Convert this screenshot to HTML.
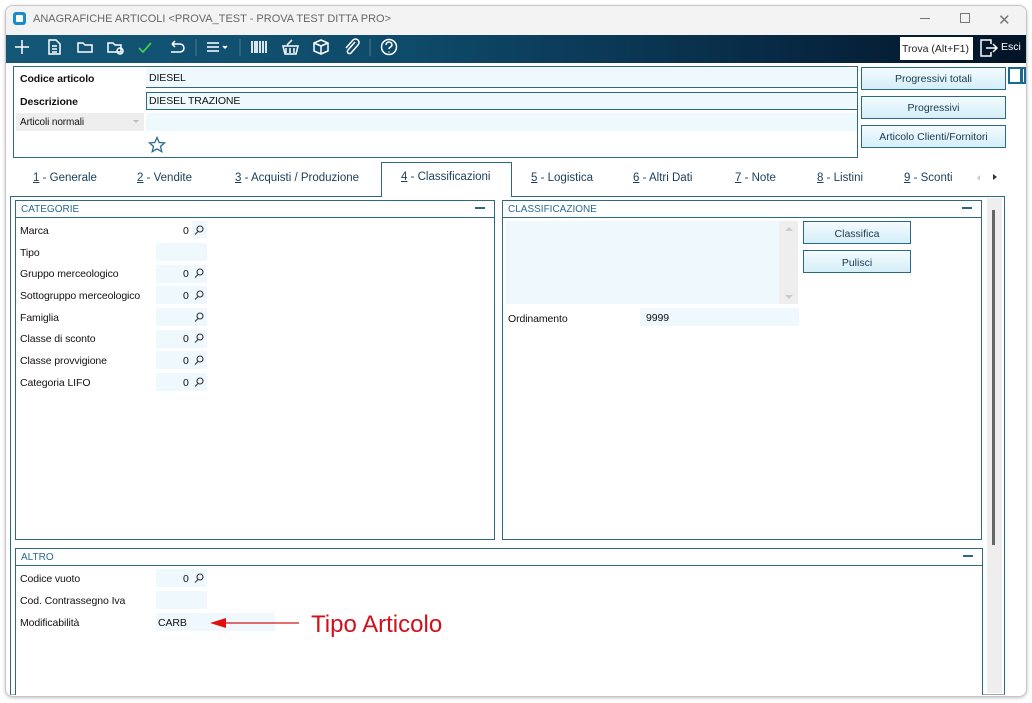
<!DOCTYPE html>
<html><head><meta charset="utf-8">
<style>
*{margin:0;padding:0;box-sizing:border-box}
body{width:1032px;height:703px;background:#fff;font-family:"Liberation Sans",sans-serif;font-size:11px;color:#111;position:relative;overflow:hidden}
.a{position:absolute;white-space:nowrap}
.win{left:5px;top:5px;width:1022px;height:692px;border:1px solid #c8c8c8;border-radius:8px;background:#fff;box-shadow:0 1px 3px rgba(0,0,0,.25);overflow:hidden}
.fld{background:#eef8fd}
.lbl{font-size:10.5px;color:#111;letter-spacing:-0.1px}
.btn{background:linear-gradient(#f4fbfe,#d4eef8);border:1px solid #2a6a80;text-align:center;font-size:10.5px;color:#1a3a50}
.grp{border:1px solid #2d6a7f;background:#fff}
.gh{height:17px;border-bottom:1px solid #2d6a7f;color:#2a6a90;font-size:10px;padding:3px 0 0 5px;position:relative}
.gh b{position:absolute;right:9px;top:6px;width:10px;height:1.5px;background:#2a6a80}
.tab{top:172px;font-size:11.5px;color:#1a3e5a}
.tab u{text-decoration:underline}
</style></head><body>
<div class="a win"></div>
<div class="a" style="left:6px;top:6px;width:1020px;height:29px;background:#f3f3f3;border-radius:8px 8px 0 0"></div>
<div class="a" style="left:13px;top:12px;width:13px;height:13px;background:#1a8ccc;border-radius:3px"></div>
<div class="a" style="left:16px;top:15px;width:7px;height:7px;background:#fff;border-radius:1px"></div>
<div class="a" style="left:33px;top:13px;font-size:11px;color:#666">ANAGRAFICHE ARTICOLI &lt;PROVA_TEST - PROVA TEST DITTA PRO&gt;</div>
<div class="a" style="left:920px;top:18px;width:10px;height:1px;background:#777"></div>
<div class="a" style="left:960px;top:13px;width:10px;height:10px;border:1px solid #777"></div>
<div class="a" style="left:998px;top:11px;font-size:15px;color:#777">✕</div>
<div class="a" style="left:6px;top:35px;width:1020px;height:28px;background:linear-gradient(90deg,#145777 0%,#0e4a69 40%,#082a45 75%,#021426 100%)"></div>
<svg class="a" style="left:6px;top:35px" width="400" height="28" viewBox="6 35 400 28" fill="none" stroke="#fff" stroke-width="1.5">
<path d="M22 40v14M15 47h14"/>
<path d="M49 40h7l4 4v10h-11z M52 46h5M52 49h5M52 52h5"/>
<path d="M78 43h5l2 2h7v7h-14z"/>
<path d="M108 43h5l2 2h6v7h-13z"/><circle cx="120" cy="51" r="3"/>
<path d="M139 48l4 4 8-9" stroke="#3fcf4a" stroke-width="1.8"/>
<path d="M172 44h8a4 4 0 010 8h-9M172 44l3-3M172 44l3 3"/>
<path d="M196 39v17M240 39v17M370 39v17" stroke="#4a7890" stroke-width="1"/>
<path d="M207 43h12M207 47h12M207 51h12"/><path d="M223 46l2 2 2-2" fill="#fff"/>
<path d="M252 41v12M255 41v12M257 41v12M260 41v12M263 41v12M266 41v12" stroke-width="1.7"/>
<path d="M283 46h15l-2 8h-11z M286 48v5M290 48v5M294 48v5 M287 45l5-5"/>
<path d="M321 40l7 3v8l-7 3-7-3v-8z M314 43l7 3 7-3 M321 46v8"/>
<path d="M355 42l-7 8a2 2 0 003 3l7-8a3.5 3.5 0 00-5-5l-7 8"/>
<circle cx="389" cy="47" r="7.5"/><path d="M386 45a3 3 0 116 0c0 2-3 2-3 4M389 51.5v1"/>
</svg>
<div class="a" style="left:900px;top:37px;width:73px;height:23px;background:#fff;font-size:10.5px;color:#222;padding:6px 0 0 2px">Trova (Alt+F1)</div>
<svg class="a" style="left:979px;top:38px" width="20" height="20" fill="none" stroke="#fff" stroke-width="1.5"><path d="M9 2H2v16h7M2 2h10v4M2 18h10v-4M7 10h11M14 6l4 4-4 4"/></svg>
<div class="a" style="left:1001px;top:41px;color:#fff;font-size:10.5px">Esci</div>
<div class="a" style="left:13px;top:66px;width:845px;height:92px;border:1px solid #2d6a7f"></div>
<div class="a lbl" style="left:20px;top:73px;font-weight:bold">Codice articolo</div>
<div class="a fld" style="left:146px;top:68px;width:711px;height:20px;border-bottom:1px solid #2d6a7f"></div>
<div class="a lbl" style="left:149px;top:72px">DIESEL</div>
<div class="a lbl" style="left:20px;top:96px;font-weight:bold">Descrizione</div>
<div class="a fld" style="left:146px;top:92px;width:712px;height:18px;border:1px solid #2d6a7f"></div>
<div class="a lbl" style="left:149px;top:95px">DIESEL TRAZIONE</div>
<div class="a" style="left:16px;top:113px;width:128px;height:18px;background:#eee"></div>
<div class="a lbl" style="left:20px;top:117px;font-size:10px">Articoli normali</div>
<div class="a" style="left:133px;top:120px;width:0;height:0;border:3px solid transparent;border-top:3px solid #bbb"></div>
<div class="a fld" style="left:146px;top:113px;width:711px;height:18px"></div>
<svg class="a" style="left:148px;top:136px" width="18" height="18" fill="none" stroke="#2a6a90" stroke-width="1.3"><path d="M9 1.5l2.2 5 5.3.4-4 3.5 1.3 5.3L9 12.9l-4.8 2.8 1.3-5.3-4-3.5 5.3-.4z"/></svg>
<div class="a btn" style="left:861px;top:67px;width:145px;height:23px;padding-top:5px">Progressivi totali</div>
<div class="a btn" style="left:861px;top:96px;width:145px;height:23px;padding-top:5px">Progressivi</div>
<div class="a btn" style="left:861px;top:125px;width:145px;height:23px;padding-top:5px">Articolo Clienti/Fornitori</div>
<div class="a" style="left:1008px;top:67px;width:18px;height:17px;border:2px solid #1a6a90;background:#fff"></div>
<div class="a" style="left:1020px;top:69px;width:3px;height:13px;background:#1a6a90"></div>
<div class="a" style="left:381px;top:162px;width:131px;height:35px;border:1px solid #2d6a7f;border-bottom:none;background:#fff;z-index:2"></div>
<div class="a tab" style="left:33px"><u>1</u> - Generale</div>
<div class="a tab" style="left:137px"><u>2</u> - Vendite</div>
<div class="a tab" style="left:235px"><u>3</u> - Acquisti / Produzione</div>
<div class="a tab" style="left:401px;top:171px;z-index:3"><u>4</u> - Classificazioni</div>
<div class="a tab" style="left:531px"><u>5</u> - Logistica</div>
<div class="a tab" style="left:633px"><u>6</u> - Altri Dati</div>
<div class="a tab" style="left:735px"><u>7</u> - Note</div>
<div class="a tab" style="left:817px"><u>8</u> - Listini</div>
<div class="a tab" style="left:904px"><u>9</u> - Sconti</div>
<div class="a" style="left:974px;top:175px;border:3px solid transparent;border-right:3px solid #ccc"></div>
<div class="a" style="left:993px;top:174px;border:3.5px solid transparent;border-left:4px solid #333"></div>
<div class="a" style="left:10px;top:196px;width:995px;height:499px;border:1px solid #2d6a7f;border-bottom-color:#9ab"></div>
<div class="a" style="left:987px;top:198px;width:15px;height:495px;background:#eee"></div>
<div class="a" style="left:992px;top:210px;width:3px;height:335px;background:#666"></div>
<div class="a grp" style="left:15px;top:200px;width:480px;height:340px"><div class="gh">CATEGORIE<b></b></div></div>
<div class="a lbl" style="left:20px;top:225px">Marca</div>
<div class="a lbl" style="left:20px;top:247px">Tipo</div>
<div class="a lbl" style="left:20px;top:268px">Gruppo merceologico</div>
<div class="a lbl" style="left:20px;top:290px">Sottogruppo merceologico</div>
<div class="a lbl" style="left:20px;top:312px">Famiglia</div>
<div class="a lbl" style="left:20px;top:333px">Classe di sconto</div>
<div class="a lbl" style="left:20px;top:355px">Classe provvigione</div>
<div class="a lbl" style="left:20px;top:377px">Categoria LIFO</div>
<div class="a fld" style="left:192px;top:221px;width:15px;height:17px"></div>
<div class="a fld" style="left:156px;top:243px;width:51px;height:18px"></div>
<div class="a fld" style="left:156px;top:265px;width:51px;height:18px"></div>
<div class="a fld" style="left:156px;top:286px;width:51px;height:18px"></div>
<div class="a fld" style="left:156px;top:308px;width:51px;height:18px"></div>
<div class="a fld" style="left:156px;top:330px;width:51px;height:18px"></div>
<div class="a fld" style="left:156px;top:351px;width:51px;height:18px"></div>
<div class="a fld" style="left:156px;top:373px;width:51px;height:18px"></div>
<div class="a lbl" style="left:183px;top:225px">0</div>
<div class="a lbl" style="left:183px;top:268px">0</div>
<div class="a lbl" style="left:183px;top:290px">0</div>
<div class="a lbl" style="left:183px;top:333px">0</div>
<div class="a lbl" style="left:183px;top:355px">0</div>
<div class="a lbl" style="left:183px;top:377px">0</div>
<svg class="a" style="left:0;top:0" width="220" height="640" fill="none" stroke="#333" stroke-width="1.1">
<g id="m"><circle cx="200" cy="229" r="3"/><path d="M198 231.5l-3 3"/></g>
<use href="#m" y="43"/><use href="#m" y="65"/><use href="#m" y="87"/><use href="#m" y="108"/><use href="#m" y="130"/><use href="#m" y="152"/><use href="#m" y="348"/>
</svg>
<div class="a grp" style="left:502px;top:200px;width:480px;height:340px"><div class="gh">CLASSIFICAZIONE<b></b></div></div>
<div class="a fld" style="left:506px;top:221px;width:273px;height:83px"></div>
<div class="a" style="left:779px;top:221px;width:19px;height:83px;background:#eee"></div>
<div class="a" style="left:785px;top:227px;border:4px solid transparent;border-bottom:4px solid #ccc;border-top:none"></div>
<div class="a" style="left:785px;top:295px;border:4px solid transparent;border-top:4px solid #ccc;border-bottom:none"></div>
<div class="a btn" style="left:803px;top:221px;width:108px;height:23px;padding-top:6px">Classifica</div>
<div class="a btn" style="left:803px;top:250px;width:108px;height:23px;padding-top:6px">Pulisci</div>
<div class="a lbl" style="left:508px;top:313px">Ordinamento</div>
<div class="a fld" style="left:640px;top:308px;width:159px;height:18px"></div>
<div class="a lbl" style="left:646px;top:312px">9999</div>
<div class="a grp" style="left:15px;top:548px;width:968px;height:147px;border-bottom:none"><div class="gh">ALTRO<b></b></div></div>
<div class="a lbl" style="left:20px;top:573px">Codice vuoto</div>
<div class="a lbl" style="left:20px;top:595px">Cod. Contrassegno Iva</div>
<div class="a lbl" style="left:20px;top:617px">Modificabilità</div>
<div class="a fld" style="left:156px;top:569px;width:51px;height:18px"></div>
<div class="a fld" style="left:156px;top:591px;width:51px;height:18px"></div>
<div class="a fld" style="left:156px;top:613px;width:119px;height:18px"></div>
<div class="a lbl" style="left:183px;top:573px">0</div>
<svg class="a" style="left:0;top:0" width="220" height="640" fill="none" stroke="#333" stroke-width="1.1"><circle cx="200" cy="577" r="3"/><path d="M198 579.5l-3 3"/></svg>
<div class="a lbl" style="left:158px;top:617px">CARB</div>
<svg class="a" style="left:205px;top:614px" width="100" height="18"><path d="M18 9H94" stroke="#d01818" stroke-width="1.3"/><path d="M5 9l16-5v10z" fill="#e01010"/></svg>
<div class="a" style="left:311px;top:611px;font-size:24px;color:#d0101a">Tipo Articolo</div>
</body></html>
